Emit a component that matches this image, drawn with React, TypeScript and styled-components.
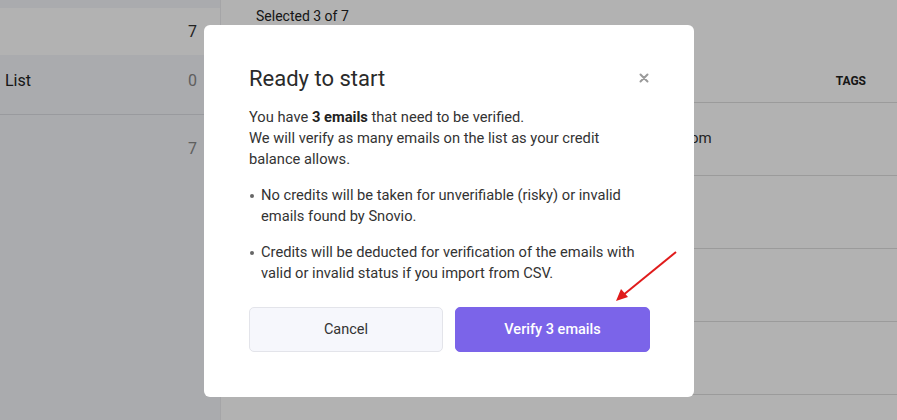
import React from 'react';
import styled, { createGlobalStyle } from 'styled-components';

const Global = createGlobalStyle`
    html, body {
        margin: 0;
        padding: 0;
        height: 100%;
    }
    body {
        font-family: Roboto, "Liberation Sans", Arial, sans-serif;
        background: #ffffff;
        overflow: hidden;
    }
`;

const S = {
    Page: styled.div`
        position: relative;
        display: flex;
        width: 897px;
        height: 420px;
        overflow: hidden;
    `,
    Sidebar: styled.aside`
        width: 221px;
        flex-shrink: 0;
        background: #f4f5fa;
        border-right: 1px solid #ececf0;
        padding-top: 8px;
        box-sizing: border-box;
    `,
    ListRow: styled.div<{ $active?: boolean; $divider?: boolean; $h: number; $pt: number }>`
        display: flex;
        justify-content: space-between;
        align-items: flex-start;
        height: ${p => p.$h}px;
        padding: ${p => p.$pt}px 23px 0 5px;
        box-sizing: border-box;
        background: ${p => (p.$active ? '#ffffff' : 'transparent')};
        border-bottom: ${p => (p.$divider ? '1px solid #dcdde3' : 'none')};
        font-size: 16px;
        line-height: 20px;
        color: #222;
    `,
    Count: styled.span<{ $muted?: boolean }>`
        color: ${p => (p.$muted ? '#888' : '#333')};
        font-size: 16px;
    `,
    Main: styled.main`
        flex: 1;
        background: #ffffff;
        display: flex;
        flex-direction: column;
    `,
    Selected: styled.div`
        padding: 8px 0 0 35px;
        font-size: 14px;
        color: #222;
        height: 58px;
        box-sizing: border-box;
    `,
    Head: styled.div`
        height: 45px;
        display: flex;
        justify-content: flex-end;
        align-items: center;
        padding: 2px 31px 0 0;
        font-size: 12px;
        font-weight: 700;
        color: #222;
        border-bottom: 1px solid #dedede;
        box-sizing: border-box;
    `,
    Row: styled.div`
        height: 73px;
        border-bottom: 1px solid #dedede;
        box-sizing: border-box;
        display: flex;
        align-items: flex-start;
        padding: 26px 0 0 469px;
        font-size: 15px;
        color: #333;
        flex-shrink: 0;
    `,
    Overlay: styled.div`
        position: absolute;
        inset: 0;
        background: rgba(0, 0, 0, 0.3);
        display: flex;
        justify-content: flex-start;
        align-items: flex-start;
        padding: 25px 0 0 204px;
        box-sizing: border-box;
    `,
    Modal: styled.div`
        width: 490px;
        height: 372px;
        background: #ffffff;
        border-radius: 6px;
        padding: 38px 44px 0 45px;
        box-sizing: border-box;
        display: flex;
        flex-direction: column;
    `,
    Header: styled.div`
        display: flex;
        justify-content: space-between;
        align-items: center;
        height: 30px;
    `,
    Title: styled.h2`
        margin: 0;
        font-size: 22px;
        font-weight: 400;
        color: #2a2a2a;
    `,
    Close: styled.button`
        border: none;
        background: none;
        padding: 0;
        width: 12px;
        height: 12px;
        display: flex;
        align-items: center;
        justify-content: center;
        cursor: pointer;
    `,
    Text: styled.p`
        margin: 14px 0 0;
        font-size: 14.7px;
        line-height: 21px;
        color: #333;

        b {
            font-weight: 700;
            color: #222;
        }
    `,
    List: styled.ul`
        margin: 15px 0 0;
        padding: 0;
        list-style: none;
        display: flex;
        flex-direction: column;
        gap: 15px;
    `,
    Item: styled.li`
        position: relative;
        padding-left: 12px;
        font-size: 14.7px;
        line-height: 21px;
        color: #333;

        &::before {
            content: '';
            position: absolute;
            left: 1px;
            top: 9px;
            width: 4px;
            height: 4px;
            border-radius: 50%;
            background: #666;
        }
    `,
    Buttons: styled.div`
        display: grid;
        grid-template-columns: 194px 195px;
        gap: 12px;
        margin-top: 23px;
    `,
    Button: styled.button<{ $primary?: boolean }>`
        height: 45px;
        border-radius: 5px;
        font-family: Roboto, "Liberation Sans", Arial, sans-serif;
        font-size: 14.5px;
        font-weight: ${p => (p.$primary ? 500 : 400)};
        color: ${p => (p.$primary ? '#ffffff' : '#333')};
        background: ${p => (p.$primary ? '#7b64e9' : '#f6f7fc')};
        border: 1px solid ${p => (p.$primary ? '#7b64e9' : '#e3e4ea')};
        cursor: pointer;
    `,
    Arrow: styled.svg`
        position: absolute;
        left: 610px;
        top: 246px;
        overflow: visible;
    `,
};

const App = () => {
    const rows = ['om', '', '', ''];

    return (
        <>
            <Global />
            <S.Page>
                <S.Sidebar>
                    <S.ListRow $active $h={47} $pt={14}>
                        <span />
                        <S.Count>7</S.Count>
                    </S.ListRow>
                    <S.ListRow $divider $h={60} $pt={16}>
                        <span>List</span>
                        <S.Count $muted>0</S.Count>
                    </S.ListRow>
                    <S.ListRow $h={60} $pt={24}>
                        <span />
                        <S.Count $muted>7</S.Count>
                    </S.ListRow>
                </S.Sidebar>
                <S.Main>
                    <S.Selected>Selected 3 of 7</S.Selected>
                    <S.Head>TAGS</S.Head>
                    {rows.map((r, i) => (
                        <S.Row key={i}>{r}</S.Row>
                    ))}
                </S.Main>

                <S.Overlay>
                    <S.Modal>
                        <S.Header>
                            <S.Title>Ready to start</S.Title>
                            <S.Close aria-label="Close">
                                <svg width="10" height="10" viewBox="0 0 10 10">
                                    <path d="M1.5 1.5L8.5 8.5M8.5 1.5L1.5 8.5" stroke="#9a9a9a" strokeWidth="2" strokeLinecap="round" />
                                </svg>
                            </S.Close>
                        </S.Header>
                        <S.Text>
                            You have <b>3 emails</b> that need to be verified.
                            <br />
                            We will verify as many emails on the list as your credit balance allows.
                        </S.Text>
                        <S.List>
                            <S.Item>No credits will be taken for unverifiable (risky) or invalid emails found by Snovio.</S.Item>
                            <S.Item>Credits will be deducted for verification of the emails with valid or invalid status if you import from CSV.</S.Item>
                        </S.List>
                        <S.Buttons>
                            <S.Button>Cancel</S.Button>
                            <S.Button $primary>Verify 3 emails</S.Button>
                        </S.Buttons>
                    </S.Modal>
                </S.Overlay>

                <S.Arrow width="70" height="60" viewBox="0 0 70 60">
                    <line x1="66" y1="6" x2="12" y2="50" stroke="#e01b1b" strokeWidth="2" />
                    <polygon points="6,55 11,43 18,51" fill="#e01b1b" />
                </S.Arrow>
            </S.Page>
        </>
    );
};

export default App;
